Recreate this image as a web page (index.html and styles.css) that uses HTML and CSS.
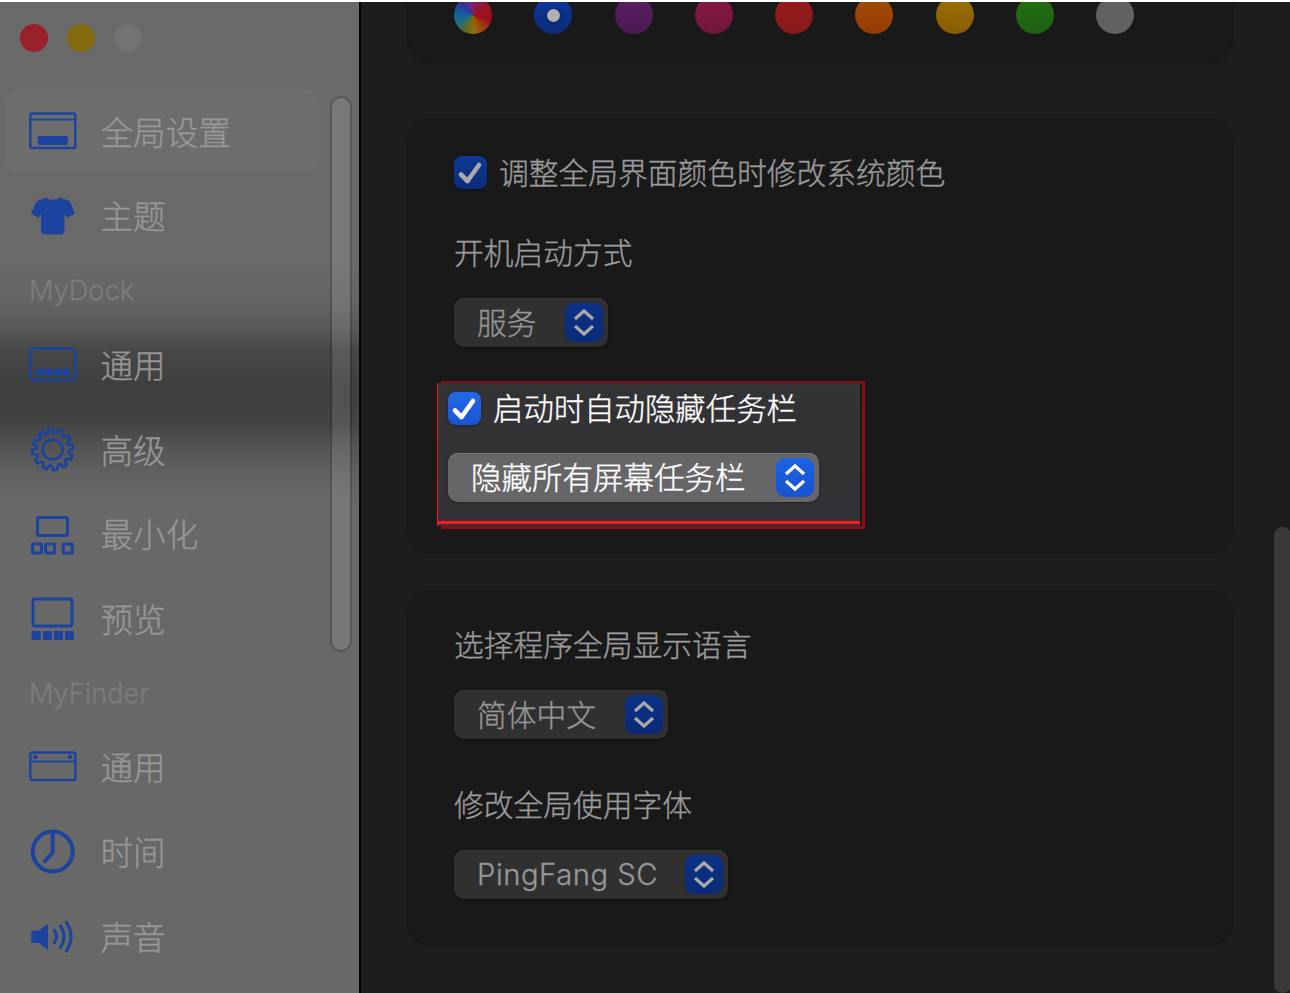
FILE: index.html
```html
<!DOCTYPE html>
<html lang="zh-CN">
<head>
    <meta charset="UTF-8">
    <meta name="viewport" content="width=device-width, initial-scale=1.0">
    <title>全局设置</title>
    <link rel="stylesheet" href="styles.css">
</head>
<body>

    <div class="window">
        <aside class="sidebar">
            <div class="traffic">
                <span class="light close"></span>
                <span class="light minimize"></span>
                <span class="light zoom"></span>
            </div>

            <div class="sidebar-body">
                <nav class="menu">
                    <a class="menu-item active">
                        <svg class="icon" viewBox="0 0 48 48"><rect x="1.300" y="6.500" width="45" height="34.500" rx="2" stroke-width="2.400"/><path d="M1.300 12.500h45" stroke-width="2.200"/><rect class="solid" x="8.500" y="29" width="30.500" height="9" rx="2.500"/></svg>
                        <span>全局设置</span>
                    </a>
                    <a class="menu-item">
                        <svg class="icon" viewBox="0 0 48 48"><path class="solid" d="M17.500 5.500C20 8.500 28 8.500 30.500 5.500L39 8.300Q41 9.200 42 11.500L46 21.500L38.500 26L35.500 22V38Q35.500 42.500 31 42.500H16.500Q12 42.500 12 38V22L9.500 26L2 21.500L6.500 11.500Q7.500 9.200 9.500 8.300Z"/></svg>
                        <span>主题</span>
                    </a>
                    <div class="menu-title">MyDock</div>
                    <a class="menu-item">
                        <svg class="icon" viewBox="0 0 48 48"><rect x="1.500" y="8.500" width="44.800" height="31.500" rx="4.500" stroke-width="2.700"/><g class="solid"><rect x="7" y="28.500" width="7.500" height="7.500" rx="2"/><rect x="15.700" y="28.500" width="7.500" height="7.500" rx="2"/><rect x="24.400" y="28.500" width="7.500" height="7.500" rx="2"/><rect x="33.100" y="28.500" width="7.500" height="7.500" rx="2"/></g></svg>
                        <span>通用</span>
                    </a>
                    <a class="menu-item">
                        <svg class="icon" viewBox="0 0 48 48">
                            <defs><path id="tooth" d="M-4.200 -15.600Q-3 -15.700 -2.700 -17L-2.200 -20.500H2.200L2.700 -17Q3 -15.700 4.200 -15.600"/></defs>
                            <g transform="translate(23.700 24.500) rotate(-7)" stroke-width="2.700">
                                <use href="#tooth"/><use href="#tooth" transform="rotate(30)"/><use href="#tooth" transform="rotate(60)"/><use href="#tooth" transform="rotate(90)"/><use href="#tooth" transform="rotate(120)"/><use href="#tooth" transform="rotate(150)"/><use href="#tooth" transform="rotate(180)"/><use href="#tooth" transform="rotate(210)"/><use href="#tooth" transform="rotate(240)"/><use href="#tooth" transform="rotate(270)"/><use href="#tooth" transform="rotate(300)"/><use href="#tooth" transform="rotate(330)"/>
                                <circle r="10"/>
                            </g>
                        </svg>
                        <span>高级</span>
                    </a>
                    <a class="menu-item">
                        <svg class="icon" viewBox="0 0 48 48"><rect x="8.500" y="7.500" width="30" height="18" rx="1.500" stroke-width="3"/><g stroke-width="3"><rect x="3.500" y="34" width="9" height="9" rx=".5"/><rect x="16.500" y="34" width="9" height="9" rx=".5"/><rect x="34.300" y="34" width="9" height="9" rx=".5"/></g></svg>
                        <span>最小化</span>
                    </a>
                    <a class="menu-item">
                        <svg class="icon" viewBox="0 0 48 48"><rect x="4" y="5" width="39" height="27" rx="2" stroke-width="3"/><g class="solid"><rect x="2.500" y="37" width="9.300" height="9" rx="1"/><rect x="14" y="37" width="9" height="9" rx="1"/><rect x="25" y="37" width="9" height="9" rx="1"/><rect x="36" y="37" width="9" height="9" rx="1"/></g></svg>
                        <span>预览</span>
                    </a>
                    <div class="menu-title">MyFinder</div>
                    <a class="menu-item">
                        <svg class="icon" viewBox="0 0 48 48"><rect x="1.300" y="9.500" width="45" height="27.500" rx="2" stroke-width="2.400"/><path d="M1.300 18.500h45" stroke-width="2.200"/><circle class="solid" cx="6.500" cy="14" r="2.300"/><circle class="solid" cx="41" cy="14" r="2.300"/></svg>
                        <span>通用</span>
                    </a>
                    <a class="menu-item">
                        <svg class="icon" viewBox="0 0 48 48"><circle cx="23.700" cy="24.500" r="20" stroke-width="4"/><path d="M23.700 7v18.500l-7.700 8.500" stroke-width="4"/></svg>
                        <span>时间</span>
                    </a>
                    <a class="menu-item">
                        <svg class="icon" viewBox="0 0 48 48"><path class="solid" d="M4 18.500H10L17.500 12.500Q19 12 19 13.500V36.500Q19 38 17.500 37L10 31H4Q2.300 31 2.300 29.500V20Q2.300 18.500 4 18.500Z"/><path d="M25.200 18.200Q29.700 24.500 25.200 31M31.500 14Q38.500 24.500 31.500 35.500M37.500 10.500Q46.500 24.500 37.500 39" stroke-width="3.200"/></svg>
                        <span>声音</span>
                    </a>
                </nav>
                <div class="sidebar-scroll"></div>
            </div>
        </aside>

        <main class="content">
            <section class="card card-colors">
                <div class="swatches">
                    <span class="swatch multi"></span>
                    <span class="swatch blue selected"></span>
                    <span class="swatch purple"></span>
                    <span class="swatch pink"></span>
                    <span class="swatch red"></span>
                    <span class="swatch orange"></span>
                    <span class="swatch yellow"></span>
                    <span class="swatch green"></span>
                    <span class="swatch graphite"></span>
                </div>
            </section>

            <section class="card card-startup">
                <div class="check-row">
                    <span class="checkbox"><svg viewBox="0 0 33 33"><path d="M7 18.500L13.500 25L25 9"/></svg></span>
                    <span class="label">调整全局界面颜色时修改系统颜色</span>
                </div>
                <div class="label field-label">开机启动方式</div>
                <div class="select select-service">
                    <span class="value">服务</span>
                    <span class="stepper"><svg viewBox="0 0 38 39"><path d="M10 16L19 8L28 16M10 23L19 31L28 23"/></svg></span>
                </div>

                <div class="highlight">
                    <div class="check-row">
                        <span class="checkbox"><svg viewBox="0 0 33 33"><path d="M7 18.500L13.500 25L25 9"/></svg></span>
                        <span class="label">启动时自动隐藏任务栏</span>
                    </div>
                    <div class="select select-screens">
                        <span class="value">隐藏所有屏幕任务栏</span>
                        <span class="stepper"><svg viewBox="0 0 38 39"><path d="M10 16L19 8L28 16M10 23L19 31L28 23"/></svg></span>
                    </div>
                </div>
            </section>

            <section class="card card-language">
                <div class="label field-label">选择程序全局显示语言</div>
                <div class="select select-language">
                    <span class="value">简体中文</span>
                    <span class="stepper"><svg viewBox="0 0 38 39"><path d="M10 16L19 8L28 16M10 23L19 31L28 23"/></svg></span>
                </div>
                <div class="label field-label second">修改全局使用字体</div>
                <div class="select select-font">
                    <span class="latin">PingFang SC</span>
                    <span class="stepper"><svg viewBox="0 0 38 39"><path d="M10 16L19 8L28 16M10 23L19 31L28 23"/></svg></span>
                </div>
            </section>
        </main>
        <div class="page-scroll"></div>
    </div>

</body>
</html>
```
FILE: styles.css
```css
*,
*::before,
*::after {
    box-sizing: border-box;
}

body {
    margin: 0;
    padding-top: 2px;
    background: #fff;
    font-family: "Noto Sans CJK SC", sans-serif;
    font-weight: 300;
    -webkit-text-stroke: 0.35px;
    overflow: hidden;
}

.window {
    display: flex;
    height: 991px;
    overflow: hidden;
    background: #1d1d1f;
}

/* Sidebar */
.sidebar {
    width: 361px;
    flex-shrink: 0;
    border-right: 2px solid #060606;
    background: linear-gradient(#696969 0, #696969 260px, #646464 300px, #595959 325px, #484848 348px, #404040 380px, #3f3f3f 402px, #454545 422px, #525252 442px, #606060 470px, #686868 500px, #686868 100%);
}

.traffic {
    display: flex;
    gap: 19px;
    padding: 22px 0 0 20px;
    height: 87px;
}

.light {
    width: 28px;
    height: 28px;
    border-radius: 50%;
}

.close {
    background: #98212a;
}

.minimize {
    background: #836b10;
}

.zoom {
    background: #727272;
}

.sidebar-body {
    display: flex;
    gap: 10px;
    padding-left: 6px;
}

.menu {
    width: 314px;
}

.menu-item {
    display: flex;
    align-items: center;
    gap: 23.5px;
    height: 84.6px;
    padding-left: 23px;
    border-radius: 15px;
    color: #979797;
    font-size: 32.6px;
    line-height: 48px;
}

.menu-item span {
    padding-bottom: 1px;
}

.menu-item.active {
    background: #6d6d6d;
}

.menu-title {
    height: 64px;
    padding-left: 23px;
    color: #7c7c7c;
    font-family: Inter, sans-serif;
    font-size: 27.2px;
    line-height: 66px;
}

.icon {
    width: 48px;
    height: 48px;
    fill: none;
    stroke: #1c449f;
    stroke-linecap: round;
    stroke-linejoin: round;
}

.icon .solid {
    fill: #1c449f;
    stroke: none;
}

.sidebar-scroll {
    width: 22px;
    height: 556px;
    margin-top: 7px;
    border: 2px solid rgba(0, 0, 0, 0.15);
    border-radius: 11px;
    background: rgba(255, 255, 255, 0.1);
    background-clip: padding-box;
}

/* Settings */
.content {
    display: flex;
    flex-direction: column;
    width: 826px;
    flex-shrink: 0;
    margin-left: 46px;
}

.card {
    isolation: isolate;
    flex-shrink: 0;
    padding: 0 46px;
    border: 1px solid #171718;
    border-radius: 24px;
    background: #19191a;
    box-shadow: 0 0 2px rgba(0, 0, 0, 0.2);
}

.card-colors {
    display: flex;
    height: 62px;
    border-top: 0;
    border-radius: 0 0 24px 24px;
}

.swatches {
    display: flex;
    gap: 42.25px;
    margin-top: -6px;
}

.swatch {
    width: 38px;
    height: 38px;
    flex-shrink: 0;
    border-radius: 50%;
}

.multi {
    background: conic-gradient(#84205c, #9c1020 75deg, #9c1020 105deg, #a04308 145deg, #926a10 175deg, #6c6a18 200deg, #176e88 245deg, #125a9c 280deg, #32339c 315deg, #57308c 340deg, #84205c);
}

.blue {
    display: flex;
    align-items: center;
    justify-content: center;
    background: linear-gradient(#0c379d, #0b2c75);
}

.selected::after {
    content: "";
    width: 13px;
    height: 13px;
    border-radius: 50%;
    background: #b0b0b0;
    box-shadow: 0 1px 5px rgba(0, 0, 0, 0.4);
}

.purple {
    background: linear-gradient(#5b1e63, #4b1a52);
}

.pink {
    background: linear-gradient(#871744, #70173a);
}

.red {
    background: linear-gradient(#991c1e, #851919);
}

.orange {
    background: linear-gradient(#a54a04, #943c04);
}

.yellow {
    background: linear-gradient(#9c7003, #875b04);
}

.green {
    background: linear-gradient(#247013, #1e6012);
}

.graphite {
    background: #616161;
}

.card-startup {
    height: 434px;
    margin-top: 55px;
    padding-top: 36px;
}

.card-language {
    height: 355px;
    margin-top: 38px;
    padding-top: 33px;
}

.check-row {
    display: flex;
    align-items: center;
    gap: 12px;
    height: 33px;
}

.checkbox {
    width: 33px;
    height: 33px;
    border-radius: 8px;
    background: linear-gradient(#0f3894, #0a2c7c);
    box-shadow: 0 1px 2px rgba(0, 0, 0, 0.4);
}

.checkbox svg {
    display: block;
    fill: none;
    stroke: #aaa;
    stroke-width: 4.6;
    stroke-linecap: round;
    stroke-linejoin: round;
}

.label {
    color: #9b9b9b;
    font-size: 29.75px;
    line-height: 36px;
    white-space: nowrap;
}

.check-row .label,
.value {
    padding-bottom: 4px;
}

.field-label {
    height: 40px;
    margin-bottom: 25px;
}

.check-row + .field-label {
    margin-top: 44px;
}

.field-label.second {
    margin-top: 46px;
}

.select {
    display: flex;
    align-items: center;
    justify-content: space-between;
    height: 49px;
    padding: 0 5px 0 23px;
    border-radius: 10px;
    background: #303031;
    box-shadow: inset 0 1px 0 #3a3a3b, 0 1px 2px rgba(0, 0, 0, 0.4);
    color: #969696;
    font-size: 29.75px;
    line-height: 36px;
    white-space: nowrap;
}

.select-service {
    width: 154px;
}

.select-language {
    width: 214px;
}

.select-font {
    width: 274px;
}

.latin {
    font-family: Inter, sans-serif;
    font-size: 29.2px;
    letter-spacing: 0.55px;
}

.stepper {
    width: 38px;
    height: 39px;
    border-radius: 9px;
    background: linear-gradient(#0c3288, #0a2a76);
}

.stepper svg {
    display: block;
    fill: none;
    stroke: #a8a8a8;
    stroke-width: 3.2;
}

/* Highlighted option with the offset red frame behind it */
.highlight {
    position: relative;
    width: 423px;
    height: 143px;
    margin: 36px 0 0 -17px;
    padding: 9px 0 0 10px;
    border-left: 1px solid #e51c23;
    background: linear-gradient(#333335, #323236);
}

.highlight::before {
    content: "";
    position: absolute;
    z-index: -1;
    left: 3px;
    top: -2px;
    width: 424px;
    height: 148px;
    border: 3px solid #8e0b10;
}

.highlight::after {
    content: "";
    position: absolute;
    left: -1px;
    right: 0;
    bottom: 2px;
    height: 3px;
    background: #f81c1f;
}

.highlight .label {
    color: #fff;
    font-size: 30.4px;
}

.highlight .checkbox {
    background: linear-gradient(#2468e8, #1854d4);
}

.highlight .checkbox svg,
.highlight .stepper svg {
    stroke: #fff;
}

.select-screens {
    width: 371px;
    margin-top: 28px;
    background: #666668;
    box-shadow: inset 0 1px 0 #7a7a7b, 0 1px 2px rgba(0, 0, 0, 0.3);
    color: #fff;
    font-size: 30.5px;
}

.highlight .stepper {
    background: linear-gradient(#1c62e4, #1754d0);
}

.page-scroll {
    width: 17px;
    height: 466px;
    flex-shrink: 0;
    margin: 525px 0 0 41px;
    border-radius: 9px;
    background: #3a3a3a;
}
```
